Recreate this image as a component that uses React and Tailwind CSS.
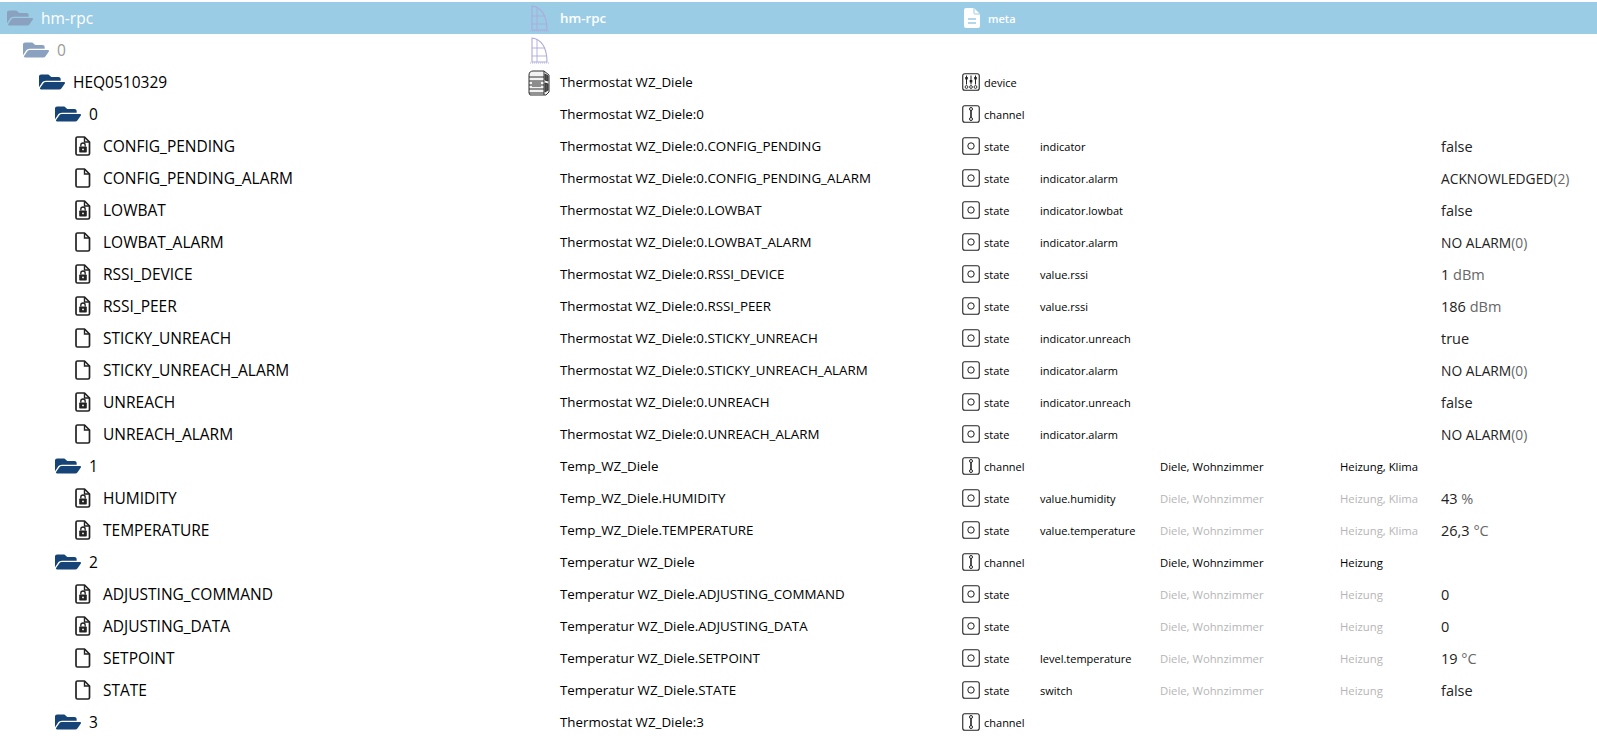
import { FaFolderOpen } from "react-icons/fa"

const rows = [
  { level: 0, kind: "folder", id: "hm-rpc", name: "hm-rpc", icon: "house", type: "meta", header: true },
  { level: 1, kind: "folder", id: "0", icon: "house", dim: true },
  { level: 2, kind: "folder", id: "HEQ0510329", name: "Thermostat WZ_Diele", icon: "thermostat", type: "device" },
  { level: 3, kind: "folder", id: "0", name: "Thermostat WZ_Diele:0", type: "channel" },
  { level: 4, kind: "lock", id: "CONFIG_PENDING", name: "Thermostat WZ_Diele:0.CONFIG_PENDING", type: "state", role: "indicator", value: "false" },
  { level: 4, kind: "file", id: "CONFIG_PENDING_ALARM", name: "Thermostat WZ_Diele:0.CONFIG_PENDING_ALARM", type: "state", role: "indicator.alarm", value: "ACKNOWLEDGED", unit: "(2)", caps: true },
  { level: 4, kind: "lock", id: "LOWBAT", name: "Thermostat WZ_Diele:0.LOWBAT", type: "state", role: "indicator.lowbat", value: "false" },
  { level: 4, kind: "file", id: "LOWBAT_ALARM", name: "Thermostat WZ_Diele:0.LOWBAT_ALARM", type: "state", role: "indicator.alarm", value: "NO ALARM", unit: "(0)", caps: true },
  { level: 4, kind: "lock", id: "RSSI_DEVICE", name: "Thermostat WZ_Diele:0.RSSI_DEVICE", type: "state", role: "value.rssi", value: "1", unit: " dBm" },
  { level: 4, kind: "lock", id: "RSSI_PEER", name: "Thermostat WZ_Diele:0.RSSI_PEER", type: "state", role: "value.rssi", value: "186", unit: " dBm" },
  { level: 4, kind: "file", id: "STICKY_UNREACH", name: "Thermostat WZ_Diele:0.STICKY_UNREACH", type: "state", role: "indicator.unreach", value: "true" },
  { level: 4, kind: "file", id: "STICKY_UNREACH_ALARM", name: "Thermostat WZ_Diele:0.STICKY_UNREACH_ALARM", type: "state", role: "indicator.alarm", value: "NO ALARM", unit: "(0)", caps: true },
  { level: 4, kind: "lock", id: "UNREACH", name: "Thermostat WZ_Diele:0.UNREACH", type: "state", role: "indicator.unreach", value: "false" },
  { level: 4, kind: "file", id: "UNREACH_ALARM", name: "Thermostat WZ_Diele:0.UNREACH_ALARM", type: "state", role: "indicator.alarm", value: "NO ALARM", unit: "(0)", caps: true },
  { level: 3, kind: "folder", id: "1", name: "Temp_WZ_Diele", type: "channel", room: "Diele, Wohnzimmer", func: "Heizung, Klima" },
  { level: 4, kind: "lock", id: "HUMIDITY", name: "Temp_WZ_Diele.HUMIDITY", type: "state", role: "value.humidity", room: "Diele, Wohnzimmer", func: "Heizung, Klima", inherited: true, value: "43", unit: " %" },
  { level: 4, kind: "lock", id: "TEMPERATURE", name: "Temp_WZ_Diele.TEMPERATURE", type: "state", role: "value.temperature", room: "Diele, Wohnzimmer", func: "Heizung, Klima", inherited: true, value: "26,3", unit: " °C" },
  { level: 3, kind: "folder", id: "2", name: "Temperatur WZ_Diele", type: "channel", room: "Diele, Wohnzimmer", func: "Heizung" },
  { level: 4, kind: "lock", id: "ADJUSTING_COMMAND", name: "Temperatur WZ_Diele.ADJUSTING_COMMAND", type: "state", room: "Diele, Wohnzimmer", func: "Heizung", inherited: true, value: "0" },
  { level: 4, kind: "lock", id: "ADJUSTING_DATA", name: "Temperatur WZ_Diele.ADJUSTING_DATA", type: "state", room: "Diele, Wohnzimmer", func: "Heizung", inherited: true, value: "0" },
  { level: 4, kind: "file", id: "SETPOINT", name: "Temperatur WZ_Diele.SETPOINT", type: "state", role: "level.temperature", room: "Diele, Wohnzimmer", func: "Heizung", inherited: true, value: "19", unit: " °C" },
  { level: 4, kind: "file", id: "STATE", name: "Temperatur WZ_Diele.STATE", type: "state", role: "switch", room: "Diele, Wohnzimmer", func: "Heizung", inherited: true, value: "false" },
  { level: 3, kind: "folder", id: "3", name: "Thermostat WZ_Diele:3", type: "channel" },
]

const indent = { 0: "pl-[7px]", 1: "pl-[23px]", 2: "pl-[39px]", 3: "pl-[55px]", 4: "pl-[75px]" }

function FileIcon({ locked }) {
  return (
    <svg viewBox="0 0 16 20" className="w-4 h-5 shrink-0 text-[#222]">
      <path d="M2.5 1h7l5 5v11.5a1.5 1.5 0 0 1-1.5 1.5H2.5A1.5 1.5 0 0 1 1 17.5V2.5A1.5 1.5 0 0 1 2.5 1z" fill="none" stroke="currentColor" strokeWidth="1.7" strokeLinejoin="round" />
      <path d="M9.5 1v5h5" fill="none" stroke="currentColor" strokeWidth="1.4" />
      {locked && (
        <>
          <rect x="4.2" y="10.5" width="7.6" height="6" rx="0.8" fill="currentColor" />
          <path d="M5.8 10.5V9.2a2.2 2.2 0 0 1 4.4 0v1.3" fill="none" stroke="currentColor" strokeWidth="1.3" />
          <circle cx="8" cy="13.4" r="0.9" fill="#fff" />
        </>
      )}
    </svg>
  )
}

function HouseIcon() {
  return (
    <svg viewBox="0 0 24 30" className="w-6 h-[30px] text-[#aeaadb]" fill="none" stroke="currentColor" strokeWidth="1.1">
      <path d="M5 27V3c9 1 15 9 15 24z" />
      <path d="M5 13h13M5 21h15M10 27V4" strokeWidth="0.9" />
      <path d="M3 28h20" strokeWidth="0.9" strokeDasharray="1 1" />
    </svg>
  )
}

function ThermostatIcon() {
  return (
    <svg viewBox="0 0 24 27" className="w-6 h-[27px] text-[#333]" fill="none" stroke="currentColor" strokeWidth="1">
      <path d="M2 6c0-3 2-4 4-4h11l5 4v17l-3 3H3l-1-2V6z" fill="#f2f2f2" />
      <path d="M2 8h15M2 12h15M2 16h15M2 20h15M2 24h15M17 2v24" />
      <rect x="5" y="12" width="9" height="6" fill="#8c8c8c" stroke="none" />
      <path d="M18 5l3 2v5l-3-1zM18 14l3 1v6l-3 2z" fill="#555" />
    </svg>
  )
}

function TypeIcon({ type }) {
  if (type === "meta") {
    return (
      <svg viewBox="0 0 16 20" className="w-4 h-5 ml-0.5 mr-1 text-white">
        <path d="M2 0h8l6 6v12a2 2 0 0 1-2 2H2a2 2 0 0 1-2-2V2a2 2 0 0 1 2-2z" fill="currentColor" />
        <path d="M10 0v5a1 1 0 0 0 1 1h5" fill="none" stroke="#9acce6" strokeWidth="1" />
        <path d="M4 11h8M4 15h8" stroke="#9acce6" strokeWidth="1.6" />
      </svg>
    )
  }
  return (
    <svg viewBox="0 0 18 18" className="w-[18px] h-[18px] text-[#222]" fill="none" stroke="currentColor">
      <rect x="0.75" y="0.75" width="16.5" height="16.5" rx="2" strokeWidth="1.1" />
      {type === "state" && <circle cx="9" cy="9" r="3.2" strokeWidth="1" />}
      {type === "channel" && (
        <>
          <circle cx="9" cy="4" r="1.5" strokeWidth="1" />
          <path d="M9 5.5v7" strokeWidth="1.6" />
          <circle cx="9" cy="14" r="1.5" strokeWidth="1" />
        </>
      )}
      {type === "device" && (
        <>
          <path d="M4.5 2.5v9M9 2.5v9M13.5 2.5v9" strokeWidth="1" />
          <rect x="3.2" y="4" width="2.6" height="2.4" fill="currentColor" stroke="none" />
          <rect x="7.7" y="7" width="2.6" height="2.4" fill="currentColor" stroke="none" />
          <rect x="12.2" y="4" width="2.6" height="2.4" fill="currentColor" stroke="none" />
          <circle cx="4.5" cy="14" r="1.4" strokeWidth="0.9" />
          <circle cx="9" cy="14" r="1.4" strokeWidth="0.9" />
          <circle cx="13.5" cy="14" r="1.4" strokeWidth="0.9" />
        </>
      )}
    </svg>
  )
}

function Row({ row }) {
  const { header, dim } = row
  return (
    <div className={`flex h-8 items-center ${header ? "bg-[#9acce6] text-white" : "text-black"}`}>
      <div className={`w-[527px] shrink-0 flex items-center ${indent[row.level]}`}>
        {row.kind === "folder" ? (
          <FaFolderOpen preserveAspectRatio="none" className={`w-[26px] h-5 shrink-0 ${dim || header ? "text-[#8aa2bf]" : "text-[#164477]"}`} />
        ) : (
          <FileIcon locked={row.kind === "lock"} />
        )}
        <span className={`${row.kind === "folder" ? "ml-2" : "ml-3"} pt-0.5 text-[15.5px] ${header ? "font-medium" : ""} ${dim ? "text-[#999]" : ""}`}>
          {row.id}
        </span>
      </div>
      <div className="w-[33px] shrink-0 flex justify-start">
        {row.icon === "house" && <HouseIcon />}
        {row.icon === "thermostat" && <ThermostatIcon />}
      </div>
      <div className={`w-[402px] shrink-0 text-[13.35px] ${header ? "font-semibold" : ""}`}>{row.name}</div>
      <div className="w-[78px] shrink-0 flex items-center gap-1">
        {row.type && <TypeIcon type={row.type} />}
        <span className={`pt-0.5 text-[11px] ${header ? "font-semibold" : ""}`}>{row.type}</span>
      </div>
      <div className="w-[120px] shrink-0 pt-0.5 text-[11px]">{row.role}</div>
      <div className={`w-[180px] shrink-0 pt-0.5 text-[11.3px] ${row.inherited ? "text-[#b5b5b5]" : ""}`}>{row.room}</div>
      <div className={`w-[101px] shrink-0 pt-0.5 text-[11.3px] ${row.inherited ? "text-[#b5b5b5]" : ""}`}>{row.func}</div>
      <div className={`pt-0.5 text-[#222] whitespace-pre ${row.caps ? "text-[13.8px]" : "text-[14.5px]"}`}>
        {row.value}
        {row.unit && <span className="text-[#666]">{row.unit}</span>}
      </div>
    </div>
  )
}

export default function App() {
  return (
    <div className="h-[753px] overflow-hidden bg-white pt-0.5 font-['Open_Sans','Noto_Sans',sans-serif]">
      {rows.map((row, i) => (
        <Row key={i} row={row} />
      ))}
    </div>
  )
}
